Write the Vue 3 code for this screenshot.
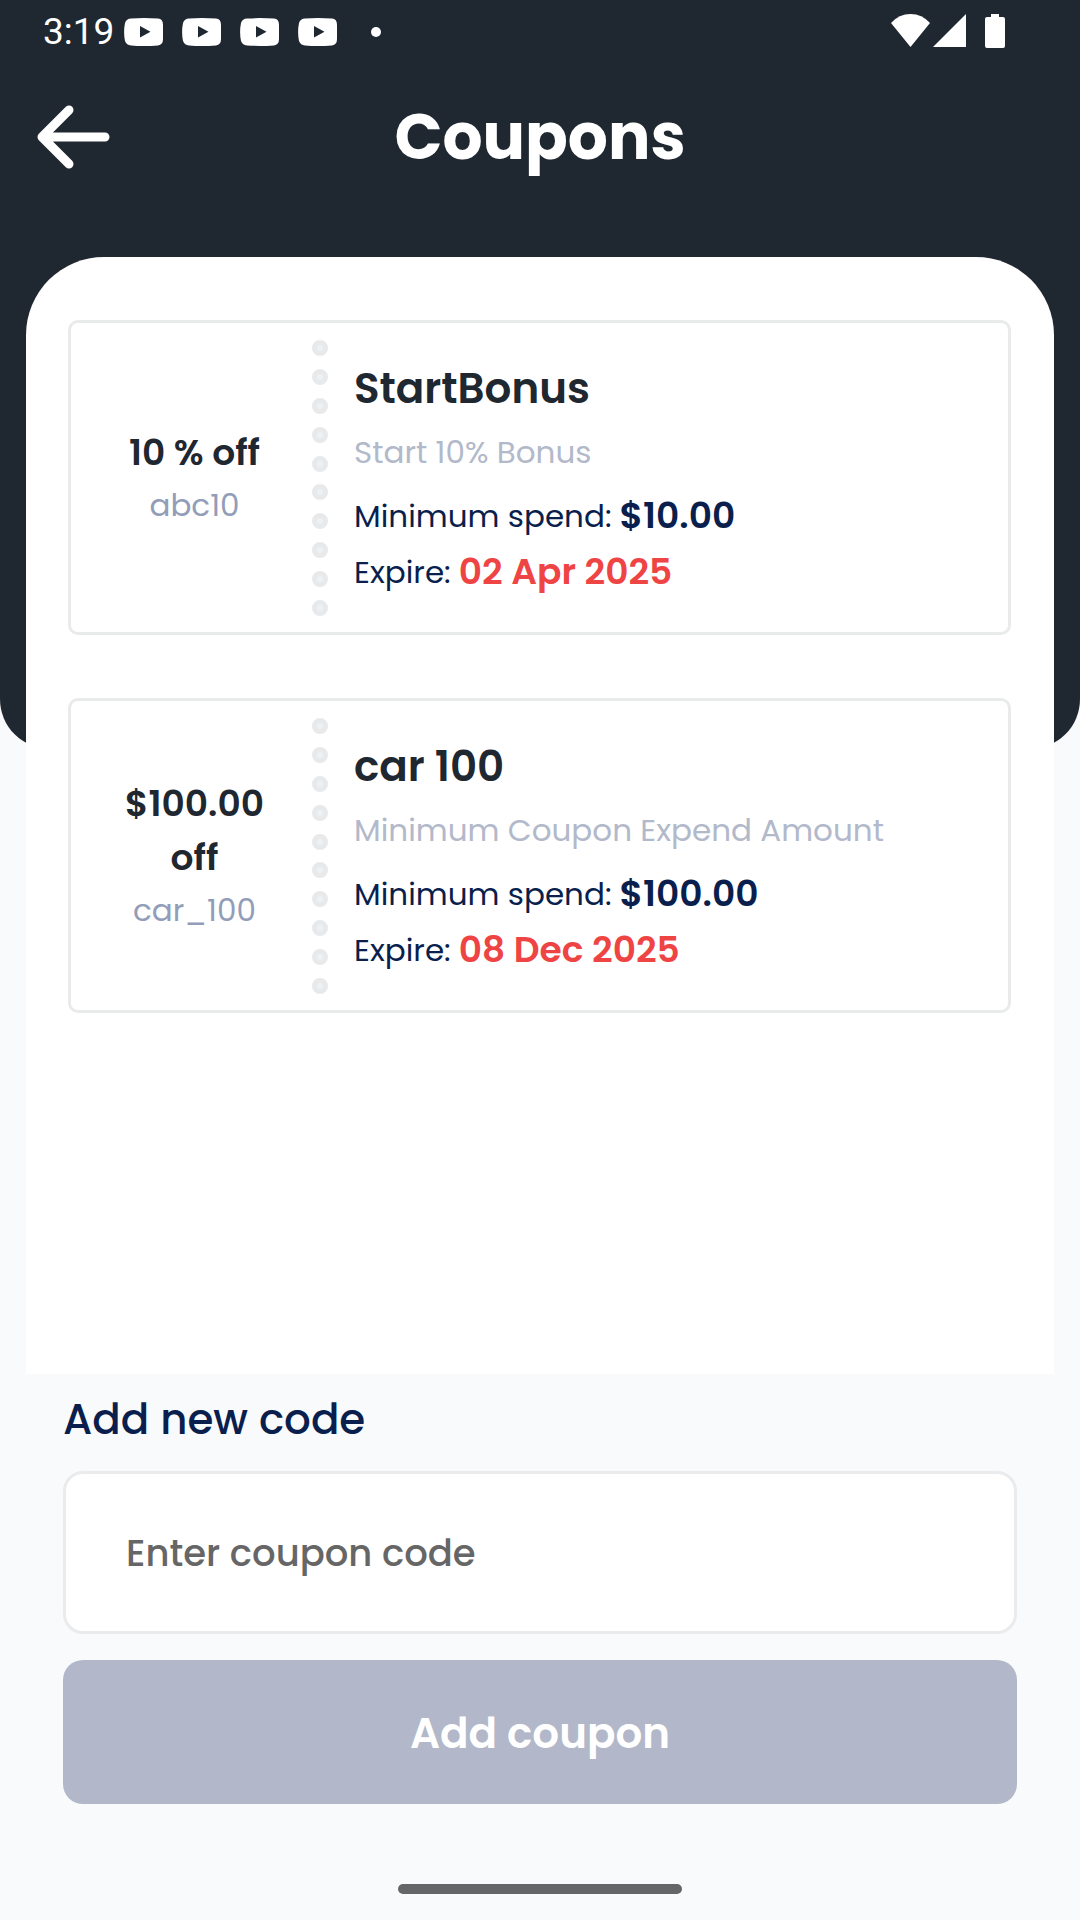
<script setup>
import { ref } from 'vue'

const code = ref('')
const notifications = 4
const dots = 10

const coupons = [
  {
    title: 'StartBonus',
    description: 'Start 10% Bonus',
    discount: '10 % off',
    code: 'abc10',
    minimum: '$10.00',
    expires: '02 Apr 2025'
  },
  {
    title: 'car 100',
    description: 'Minimum Coupon Expend Amount',
    discount: '$100.00 off',
    code: 'car_100',
    minimum: '$100.00',
    expires: '08 Dec 2025'
  }
]
</script>

<template>
  <div class="page">
    <header class="hero">
      <div class="status">
        <span class="clock">3:19</span>
        <div class="notices">
          <svg v-for="n in notifications" :key="n" width="39" height="28" viewBox="0 0 39 28" aria-hidden="true">
            <path
              fill="#fff"
              fill-rule="evenodd"
              d="M7 .6Q19.5-.4 34 .6Q39 1 39 7V21Q39 27 34 27.400Q19.500 28.400 7 27.400Q2.500 27.200 1 23Q-.8 14 1 5Q2.500.8 7 .6ZM16 8V19.500L26.500 13.700Z"
            />
          </svg>
          <span class="more"></span>
        </div>
        <svg class="signals" width="115" height="35" viewBox="0 0 115 35" aria-hidden="true">
          <g fill="#fff">
            <path d="M0 9Q8 0 19.500 0T39 9L19.500 33Z" />
            <path d="M75 0V33H42Z" />
            <path d="M100 0H108V3H112Q114 3 114 5V32Q114 34 112 34H96Q94 34 94 32V5Q94 3 96 3H100Z" />
          </g>
        </svg>
      </div>
      <div class="bar">
        <button class="back" type="button" aria-label="Back">
          <svg width="74" height="64" viewBox="0 0 74 64" aria-hidden="true">
            <path
              d="M32 5L5 32L32 59M5 32H68"
              fill="none"
              stroke="#fff"
              stroke-width="9"
              stroke-linecap="round"
              stroke-linejoin="round"
            />
          </svg>
        </button>
        <h1>Coupons</h1>
      </div>
    </header>

    <main class="sheet">
      <article v-for="coupon in coupons" :key="coupon.code" class="coupon">
        <div class="offer">
          <strong>{{ coupon.discount }}</strong>
          <span>{{ coupon.code }}</span>
        </div>
        <div class="perforation" aria-hidden="true">
          <i v-for="n in dots" :key="n"></i>
        </div>
        <div class="details">
          <h2>{{ coupon.title }}</h2>
          <p class="description">{{ coupon.description }}</p>
          <p class="row">Minimum spend: <b>{{ coupon.minimum }}</b></p>
          <p class="row">Expire: <b class="expires">{{ coupon.expires }}</b></p>
        </div>
      </article>
    </main>

    <form class="add" @submit.prevent>
      <label for="coupon-code">Add new code</label>
      <input id="coupon-code" v-model="code" type="text" placeholder="Enter coupon code" />
      <button type="submit">Add coupon</button>
    </form>
    <div class="home"></div>
  </div>
</template>

<style>
body {
  margin: 0;
  background: #f9fafc;
}
</style>

<style scoped>
.page {
  display: flex;
  flex-direction: column;
  min-height: 100vh;
  background: #f9fafc;
  color: #1f2730;
  font-family: Poppins, Inter, "Liberation Sans", sans-serif;
}

.page * {
  box-sizing: border-box;
}

h1,
h2,
p {
  margin: 0;
}

.hero {
  padding-bottom: 539px;
  border-radius: 0 0 50px 50px;
  background: #1f2730;
}

.status {
  display: flex;
  align-items: center;
  height: 63px;
  padding: 0 74px 0 43px;
  color: #fff;
}

.clock {
  font: 400 37px/43px Roboto, sans-serif;
}

.notices {
  display: flex;
  align-items: center;
  gap: 19px;
  margin-left: 10px;
}

.more {
  width: 10px;
  height: 10px;
  margin-left: 15px;
  border-radius: 50%;
  background: #fff;
}

.signals {
  margin-left: auto;
}

.bar {
  display: grid;
  grid-template-columns: 74px 1fr 74px;
  align-items: center;
  height: 147px;
  padding: 0 37px;
}

.back {
  display: flex;
  padding: 0;
  border: 0;
  background: none;
}

h1 {
  color: #fff;
  font-size: 63px;
  font-weight: 700;
  line-height: 80px;
  text-align: center;
}

.sheet {
  position: relative;
  display: flex;
  flex: 1;
  flex-direction: column;
  gap: 63px;
  margin: -492px 26px 0;
  padding: 63px 43px 63px 42px;
  border-radius: 78px 78px 0 0;
  background: #fff;
}

.coupon {
  display: flex;
  border: 3px solid #e9ebeb;
  border-radius: 10px;
}

.offer {
  display: flex;
  flex-direction: column;
  justify-content: center;
  width: 241px;
  padding: 0 40px 0 46px;
  text-align: center;
}

.offer strong {
  font-size: 36px;
  font-weight: 600;
  line-height: 54px;
}

.offer span {
  color: #929db9;
  font-size: 31px;
  line-height: 50px;
}

.perforation {
  display: flex;
  flex-direction: column;
  justify-content: space-between;
  padding: 17px 0 16px;
}

.perforation i {
  width: 16px;
  height: 16px;
  border: 5px solid #e7e9eb;
  border-radius: 50%;
  background: #eff0f2;
}

.details {
  flex: 1;
  padding: 36px 24px 32px 26px;
}

h2 {
  font-size: 42px;
  font-weight: 600;
  line-height: 60px;
}

.description,
.row {
  font-size: 31px;
  line-height: 56px;
}

.description {
  margin: 5px 0 8px;
  color: #b2b9ca;
}

.row {
  display: flex;
  align-items: center;
  gap: 8px;
  color: #0a1f4d;
}

.row b {
  font-size: 36px;
  font-weight: 600;
}

.row .expires {
  color: #ef4444;
}

.add {
  display: flex;
  flex-direction: column;
  padding: 16px 63px 0;
}

.add label {
  color: #0a1f4d;
  font-size: 42px;
  font-weight: 500;
  line-height: 60px;
}

.add input {
  width: 100%;
  height: 163px;
  margin: 21px 0 26px;
  padding: 0 60px;
  border: 3px solid #e9ebed;
  border-radius: 20px;
  background: #fff;
  color: #1f2730;
  font: inherit;
  font-size: 37px;
  font-weight: 500;
}

.add input::placeholder {
  color: #666;
  opacity: 1;
}

.add button {
  height: 144px;
  padding: 2px 0 0;
  border: 0;
  border-radius: 20px;
  background: #b2b8c9;
  color: #fff;
  font: inherit;
  font-size: 42px;
  font-weight: 600;
}

.home {
  align-self: center;
  width: 284px;
  height: 10px;
  margin: 80px 0 26px;
  border-radius: 5px;
  background: #656667;
}
</style>
